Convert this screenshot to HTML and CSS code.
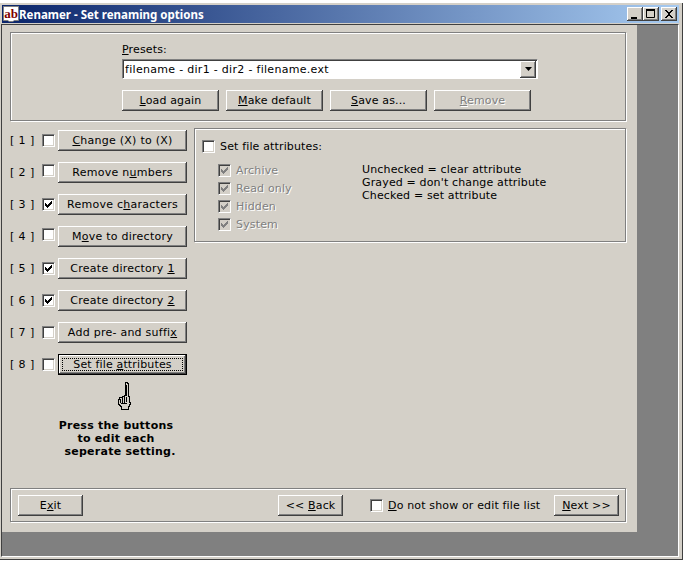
FILE: index.html
```html
<!DOCTYPE html>
<html>
<head>
<meta charset="utf-8">
<title>Renamer - Set renaming options</title>
<link rel="stylesheet" href="styles.css">
</head>
<body>
<div class="window">
  <div class="titlebar">
    <svg class="appicon" width="16" height="16" viewBox="0 0 16 16"><path d="M0.5 0.5H15.5V14.5H11L10 15.5H6L5 14.5H0.5Z" fill="#fff" stroke="#808080"/><text x="8" y="11.5" text-anchor="middle" class="abtext">ab</text></svg>
    <span class="titletext">Renamer - Set renaming options</span>
    <div class="controls">
      <span class="ctl"><svg width="16" height="14" viewBox="0 0 16 14"><rect x="4" y="10" width="6" height="2" fill="#000"/></svg></span>
      <span class="ctl"><svg width="16" height="14" viewBox="0 0 16 14"><path d="M3.5 2.5H11.5V10.5H3.5Z" fill="none" stroke="#000"/><rect x="3" y="2" width="9" height="2" fill="#000"/></svg></span>
      <span class="ctl ctl-close"><svg width="16" height="14" viewBox="0 0 16 14" shape-rendering="crispEdges"><path d="M4 3H6V4H7V5H9V4H10V3H12V4H11V5H10V6H9V8H10V9H11V10H12V11H10V10H9V9H7V10H6V11H4V10H5V9H6V8H7V6H6V5H5V4H4Z" fill="#000"/></svg></span>
    </div>
  </div>
  <div class="client">
    <div class="panel">
      <div class="etched presets">
        <div class="presets-label"><span class="u">P</span>resets:</div>
        <div class="combo">
          <span class="combo-text">filename - dir1 - dir2 - filename.ext</span>
          <span class="combo-btn"><svg width="7" height="4" viewBox="0 0 7 4"><path d="M0 0H7L3.5 4Z" fill="#000"/></svg></span>
        </div>
        <div class="preset-btns">
          <button class="btn w97"><span class="u">L</span>oad again</button>
          <button class="btn w97"><span class="u">M</span>ake default</button>
          <button class="btn w97"><span class="u">S</span>ave as...</button>
          <button class="btn w97 disabled"><span class="u">R</span>emove</button>
        </div>
      </div>
      <div class="middle">
        <div class="steps">
          <div class="step"><span class="num">[ 1 ]</span><span class="check"></span><button class="btn stepbtn"><span class="u">C</span>hange (X) to (X)</button></div>
          <div class="step"><span class="num">[ 2 ]</span><span class="check up"></span><button class="btn stepbtn">Remove n<span class="u">u</span>mbers</button></div>
          <div class="step"><span class="num">[ 3 ]</span><span class="check"><svg class="tick" width="9" height="9" viewBox="0 0 9 9" shape-rendering="crispEdges"><path d="M1 3H2V4H3V5H4V4H5V3H6V2H7V1H8V4H7V5H6V6H5V7H4V8H3V7H2V6H1Z" fill="#000"/></svg></span><button class="btn stepbtn">Remove c<span class="u">h</span>aracters</button></div>
          <div class="step"><span class="num">[ 4 ]</span><span class="check up"></span><button class="btn stepbtn">M<span class="u">o</span>ve to directory</button></div>
          <div class="step"><span class="num">[ 5 ]</span><span class="check"><svg class="tick" width="9" height="9" viewBox="0 0 9 9" shape-rendering="crispEdges"><path d="M1 3H2V4H3V5H4V4H5V3H6V2H7V1H8V4H7V5H6V6H5V7H4V8H3V7H2V6H1Z" fill="#000"/></svg></span><button class="btn stepbtn">Create directory <span class="u">1</span></button></div>
          <div class="step"><span class="num">[ 6 ]</span><span class="check"><svg class="tick" width="9" height="9" viewBox="0 0 9 9" shape-rendering="crispEdges"><path d="M1 3H2V4H3V5H4V4H5V3H6V2H7V1H8V4H7V5H6V6H5V7H4V8H3V7H2V6H1Z" fill="#000"/></svg></span><button class="btn stepbtn">Create directory <span class="u">2</span></button></div>
          <div class="step"><span class="num">[ 7 ]</span><span class="check"></span><button class="btn stepbtn">Add pre- and suffi<span class="u">x</span></button></div>
          <div class="step"><span class="num">[ 8 ]</span><span class="check"></span><button class="btn stepbtn focused"><span class="focusring">Set file <span class="u">a</span>ttributes</span></button></div>
          <svg class="hand" width="16" height="28" viewBox="0 0 16 28" shape-rendering="crispEdges"><path d="M8.5 1.5V0.5H10.5V1.5H11.5V14.5H12.5V20.5H13.5V22.5H12.5V24.5H11.5V27.5H4.5V24.5H3.5V23.5H2.5V22.5H1.5V17.5H2.5V15.5H5.5V14.5H7.5V13.5H8.5Z" fill="#d4d0c8" stroke="#000"/><path d="M3 17V21M5 16V21M7 15V21M9 15V20M4 21H10M9 3V14" stroke="#000" fill="none"/></svg>
          <div class="hint">Press the buttons<br>to edit each<br>&nbsp;&nbsp;seperate setting.</div>
        </div>
        <div class="etched attrs">
          <label class="attr-head"><span class="check"></span><span>Set file attributes:</span></label>
          <div class="attr-body">
            <div class="attr-list">
              <div class="attr"><span class="check gray"><svg class="tick" width="9" height="9" viewBox="0 0 9 9" shape-rendering="crispEdges"><path d="M1 3H2V4H3V5H4V4H5V3H6V2H7V1H8V4H7V5H6V6H5V7H4V8H3V7H2V6H1Z" fill="#808080"/></svg></span><span class="distext">Archive</span></div>
              <div class="attr"><span class="check gray"><svg class="tick" width="9" height="9" viewBox="0 0 9 9" shape-rendering="crispEdges"><path d="M1 3H2V4H3V5H4V4H5V3H6V2H7V1H8V4H7V5H6V6H5V7H4V8H3V7H2V6H1Z" fill="#808080"/></svg></span><span class="distext">Read only</span></div>
              <div class="attr"><span class="check gray"><svg class="tick" width="9" height="9" viewBox="0 0 9 9" shape-rendering="crispEdges"><path d="M1 3H2V4H3V5H4V4H5V3H6V2H7V1H8V4H7V5H6V6H5V7H4V8H3V7H2V6H1Z" fill="#808080"/></svg></span><span class="distext">Hidden</span></div>
              <div class="attr"><span class="check gray"><svg class="tick" width="9" height="9" viewBox="0 0 9 9" shape-rendering="crispEdges"><path d="M1 3H2V4H3V5H4V4H5V3H6V2H7V1H8V4H7V5H6V6H5V7H4V8H3V7H2V6H1Z" fill="#808080"/></svg></span><span class="distext">System</span></div>
            </div>
            <div class="legend">Unchecked = clear attribute<br>Grayed = don't change attribute<br>Checked = set attribute</div>
          </div>
        </div>
      </div>
      <div class="etched footer">
        <button class="btn w65">E<span class="u">x</span>it</button>
        <button class="btn w65 back">&lt;&lt; <span class="u">B</span>ack</button>
        <span class="check nolist"></span><span class="nolist-text"><span class="u">D</span>o not show or edit file list</span>
        <button class="btn w65 next"><span class="u">N</span>ext &gt;&gt;</button>
      </div>
    </div>
  </div>
</div>
</body>
</html>
```
FILE: styles.css
```css
* { box-sizing: border-box; }
html, body { margin: 0; padding: 0; }
body {
  width: 683px;
  height: 562px;
  background: #fff;
  padding-top: 3px;
  overflow: hidden;
  font-family: "DejaVu Sans", Verdana, sans-serif;
  font-size: 11px;
  letter-spacing: 0.15px;
  color: #000;
}
.window {
  width: 683px;
  height: 557px;
  background: #d4d0c8;
  padding: 2px 4px 3px 1px;
  box-shadow: inset -1px -1px 0 #404040;
  display: flex;
  flex-direction: column;
}
.titlebar {
  height: 18px;
  margin-left: 1px;
  display: flex;
  align-items: center;
  padding-left: 1px;
  background: linear-gradient(to right, #0a246a, #a6caf0);
  flex: none;
}
.appicon { flex: none; }
.abtext { font-family: "Liberation Serif", serif; font-weight: bold; font-size: 13px; fill: #800000; letter-spacing: 0; }
.titletext { color: #fff; font-family: "Noto Sans", sans-serif; font-weight: bold; font-size: 11.5px; letter-spacing: 0; margin-left: 0; }
.controls { margin-left: auto; display: flex; margin-right: 2px; }
.ctl {
  width: 16px; height: 14px; background: #d4d0c8;
  box-shadow: inset -1px -1px 0 #404040, inset 1px 1px 0 #fff, inset -2px -2px 0 #808080;
  display: block;
}
.ctl svg { display: block; }
.ctl-close { margin-left: 2px; }
.client {
  flex: 1;
  background: #808080;
  margin-top: 1px;
  border-top: 1px solid #404040;
  border-left: 1px solid #404040;
  border-right: 1px solid #fff;
  border-bottom: 1px solid #fff;
}
.panel {
  width: 635px;
  height: 507px;
  background: #d4d0c8;
  padding: 7px 0 0 8px;
  display: flex;
  flex-direction: column;
}
.etched {
  border: 1px solid #808080;
  box-shadow: inset 1px 1px 0 #fff, 1px 1px 0 #fff;
}
.presets { width: 616px; height: 89px; padding: 10px 0 0 111px; flex: none; }
.presets-label { height: 14px; line-height: 14px; margin-bottom: 2px; }
.u { text-decoration: underline; }
.combo {
  width: 416px; height: 20px; display: flex; align-items: center;
  background: #fff;
  border-top: 1px solid #808080; border-left: 1px solid #808080;
  border-right: 1px solid #fff; border-bottom: 1px solid #fff;
  box-shadow: inset 1px 1px 0 #404040;
  padding: 1px 1px 0 2px;
  position: relative;
}
.combo-text { flex: 1; letter-spacing: 0.3px; margin-top: -1px; }
.combo-btn {
  width: 16px; height: 17px; margin-top: -1px; background: #d4d0c8;
  box-shadow: inset -1px -1px 0 #404040, inset 1px 1px 0 #fff, inset -2px -2px 0 #808080;
  display: flex; align-items: center; justify-content: center;
}
.combo-btn svg { display: block; }
.preset-btns { display: flex; gap: 7px; margin-top: 11px; }
.btn {
  height: 21px; padding: 0; border: 0;
  background: #d4d0c8;
  font: inherit; letter-spacing: inherit; color: #000;
  box-shadow: inset -1px -1px 0 #404040, inset 1px 1px 0 #fff, inset -2px -2px 0 #808080;
  display: block; text-align: center; flex: none;
}
.w97 { width: 97px; }
.w65 { width: 65px; }
.disabled { color: #808080; text-shadow: 1px 1px 0 #fff; }
.middle { display: flex; flex: 1; min-height: 0; margin-top: 7px; }
.steps { width: 184px; flex: none; padding-top: 2px; display: flex; flex-direction: column; }
.step { height: 21px; margin-bottom: 11px; display: flex; align-items: center; flex: none; }
.num { width: 32px; flex: none; white-space: pre; word-spacing: 0.5px; }
.check {
  width: 13px; height: 13px; background: #fff; flex: none; display: block;
  border-top: 1px solid #808080; border-left: 1px solid #808080;
  border-right: 1px solid #fff; border-bottom: 1px solid #fff;
  box-shadow: inset 1px 1px 0 #404040, inset -1px -1px 0 #d4d0c8;
  padding: 1px;
}
.check.up { margin-bottom: 4px; }
.check.gray { background: #d4d0c8; }
.tick { display: block; }
.stepbtn { width: 129px; margin-left: 3px; letter-spacing: 0.25px; }
.focused {
  box-shadow: inset 0 0 0 1px #000, inset -2px -2px 0 #404040, inset 2px 2px 0 #fff, inset -3px -3px 0 #808080;
  padding: 4px;
  letter-spacing: 0.15px;
}
.focusring { display: block; border: 1px dotted #000; height: 13px; line-height: 11px; }
.hand { display: block; margin: -4px 0 0 107px; flex: none; }
.hint { margin-top: 9px; width: 164px; margin-left: 24px; text-align: center; font-weight: bold; line-height: 13px; letter-spacing: 0.25px; }
.attrs { width: 432px; height: 114px; margin-left: 0; padding: 11px 0 0 7px; }
.attr-head { display: flex; align-items: center; gap: 5px; height: 13px; }
.attr-body { display: flex; margin-top: 8px; padding-left: 16px; }
.attr-list { width: 144px; flex: none; }
.attr { height: 18px; display: flex; align-items: center; gap: 5px; }
.distext { color: #808080; text-shadow: 1px 1px 0 #fff; }
.legend { line-height: 13px; margin-top: 2px; }
.footer { width: 616px; height: 34px; margin-top: auto; margin-bottom: 10px; flex: none; padding: 0 6px 0 7px; display: flex; align-items: center; }
.back { margin-left: 195px; }
.nolist { margin-left: 27px; }
.nolist-text { margin-left: 5px; }
.next { margin-left: auto; }
```
